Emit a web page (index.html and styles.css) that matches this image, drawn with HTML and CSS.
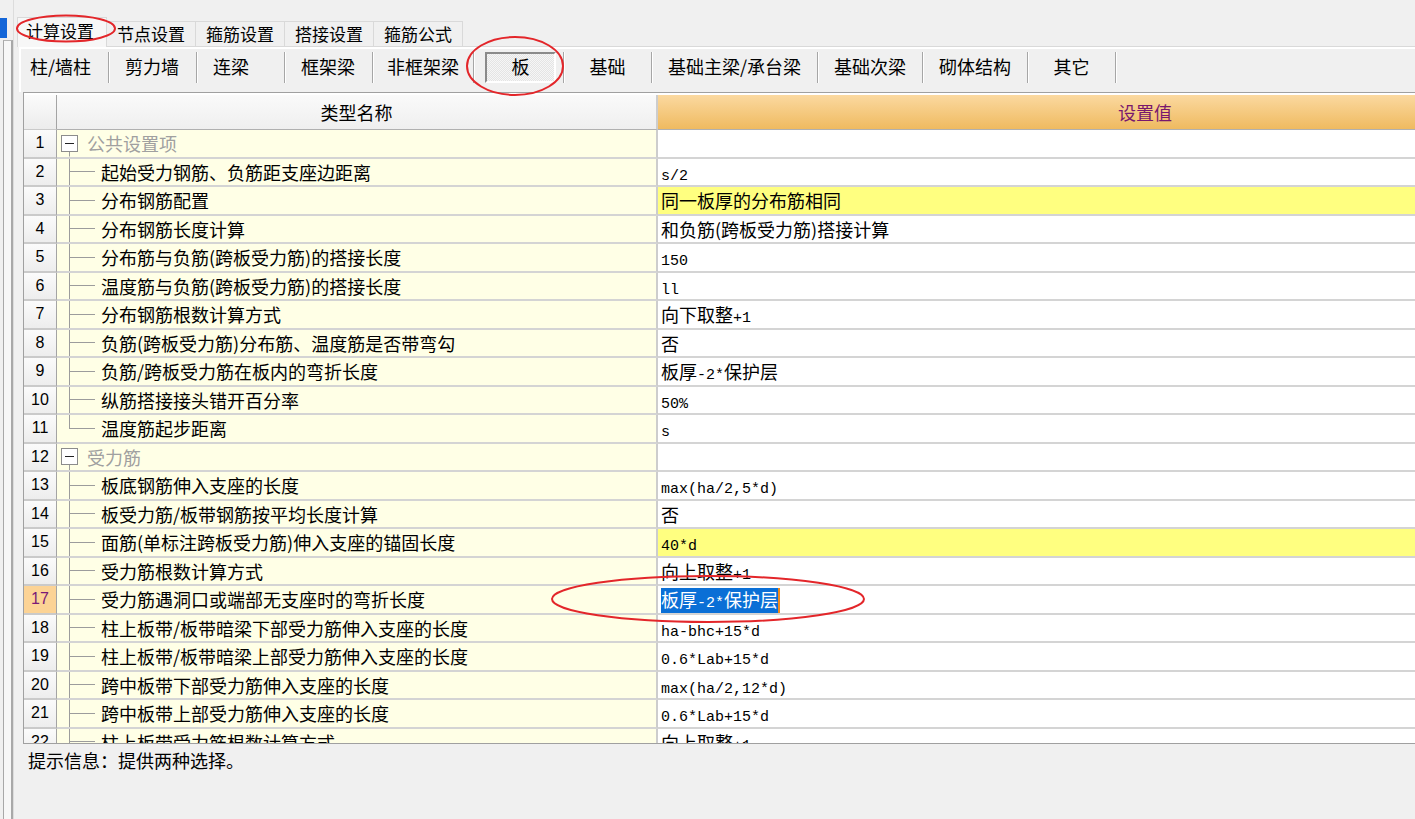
FILE: index.html
```html
<!DOCTYPE html>
<html lang="zh-CN">
<head>
<meta charset="utf-8">
<title>计算设置</title>
<link rel="stylesheet" href="styles.css">
</head>
<body>
<div class="app">
  <div class="side">
    <div class="side-sel"></div>
    <div class="side-list"></div>
  </div>
  <div class="main">
    <div class="tabs">
      <div class="tab active">计算设置</div>
      <div class="tab">节点设置</div>
      <div class="tab">箍筋设置</div>
      <div class="tab">搭接设置</div>
      <div class="tab">箍筋公式</div>
    </div>
    <div class="panel">
      <div class="subtabs">
        <div class="st first">柱/墙柱</div>
        <div class="st">剪力墙</div>
        <div class="st">连梁</div>
        <div class="st">框架梁</div>
        <div class="st tight">非框架梁</div>
        <div class="st sel-wrap"><span class="pressed">板</span></div>
        <div class="st center">基础</div>
        <div class="st">基础主梁/承台梁</div>
        <div class="st">基础次梁</div>
        <div class="st">砌体结构</div>
        <div class="st center">其它</div>
      </div>
      <div class="grid">
        <div class="row head">
          <div class="num"></div>
          <div class="name">类型名称</div>
          <div class="val">设置值</div>
        </div>
        <div class="row">
          <div class="num">1</div>
          <div class="name"><span class="gtree"><span class="box"><span class="minus"></span></span></span><span class="gtext">公共设置项</span></div>
          <div class="val"></div>
        </div>
        <div class="row">
          <div class="num">2</div>
          <div class="name"><span class="tree"></span><span class="text">起始受力钢筋、负筋距支座边距离</span></div>
          <div class="val"><span class="m">s/2</span></div>
        </div>
        <div class="row">
          <div class="num">3</div>
          <div class="name"><span class="tree"></span><span class="text">分布钢筋配置</span></div>
          <div class="val hl">同一板厚的分布筋相同</div>
        </div>
        <div class="row">
          <div class="num">4</div>
          <div class="name"><span class="tree"></span><span class="text">分布钢筋长度计算</span></div>
          <div class="val">和负筋(跨板受力筋)搭接计算</div>
        </div>
        <div class="row">
          <div class="num">5</div>
          <div class="name"><span class="tree"></span><span class="text">分布筋与负筋(跨板受力筋)的搭接长度</span></div>
          <div class="val"><span class="m">150</span></div>
        </div>
        <div class="row">
          <div class="num">6</div>
          <div class="name"><span class="tree"></span><span class="text">温度筋与负筋(跨板受力筋)的搭接长度</span></div>
          <div class="val"><span class="m">ll</span></div>
        </div>
        <div class="row">
          <div class="num">7</div>
          <div class="name"><span class="tree"></span><span class="text">分布钢筋根数计算方式</span></div>
          <div class="val">向下取整<span class="m">+1</span></div>
        </div>
        <div class="row">
          <div class="num">8</div>
          <div class="name"><span class="tree"></span><span class="text">负筋(跨板受力筋)分布筋、温度筋是否带弯勾</span></div>
          <div class="val">否</div>
        </div>
        <div class="row">
          <div class="num">9</div>
          <div class="name"><span class="tree"></span><span class="text">负筋/跨板受力筋在板内的弯折长度</span></div>
          <div class="val">板厚<span class="m">-2*</span>保护层</div>
        </div>
        <div class="row">
          <div class="num">10</div>
          <div class="name"><span class="tree"></span><span class="text">纵筋搭接接头错开百分率</span></div>
          <div class="val"><span class="m">50%</span></div>
        </div>
        <div class="row">
          <div class="num">11</div>
          <div class="name"><span class="tree last"></span><span class="text">温度筋起步距离</span></div>
          <div class="val"><span class="m">s</span></div>
        </div>
        <div class="row">
          <div class="num">12</div>
          <div class="name"><span class="gtree"><span class="box"><span class="minus"></span></span></span><span class="gtext">受力筋</span></div>
          <div class="val"></div>
        </div>
        <div class="row">
          <div class="num">13</div>
          <div class="name"><span class="tree"></span><span class="text">板底钢筋伸入支座的长度</span></div>
          <div class="val"><span class="m">max(ha/2,5*d)</span></div>
        </div>
        <div class="row">
          <div class="num">14</div>
          <div class="name"><span class="tree"></span><span class="text">板受力筋/板带钢筋按平均长度计算</span></div>
          <div class="val">否</div>
        </div>
        <div class="row">
          <div class="num">15</div>
          <div class="name"><span class="tree"></span><span class="text">面筋(单标注跨板受力筋)伸入支座的锚固长度</span></div>
          <div class="val hl"><span class="m">40*d</span></div>
        </div>
        <div class="row">
          <div class="num">16</div>
          <div class="name"><span class="tree"></span><span class="text">受力筋根数计算方式</span></div>
          <div class="val">向上取整<span class="m">+1</span></div>
        </div>
        <div class="row current">
          <div class="num">17</div>
          <div class="name"><span class="tree"></span><span class="text">受力筋遇洞口或端部无支座时的弯折长度</span></div>
          <div class="val"><span class="selection">板厚<span class="m">-2*</span>保护层</span></div>
        </div>
        <div class="row">
          <div class="num">18</div>
          <div class="name"><span class="tree"></span><span class="text">柱上板带/板带暗梁下部受力筋伸入支座的长度</span></div>
          <div class="val"><span class="m">ha-bhc+15*d</span></div>
        </div>
        <div class="row">
          <div class="num">19</div>
          <div class="name"><span class="tree"></span><span class="text">柱上板带/板带暗梁上部受力筋伸入支座的长度</span></div>
          <div class="val"><span class="m">0.6*Lab+15*d</span></div>
        </div>
        <div class="row">
          <div class="num">20</div>
          <div class="name"><span class="tree"></span><span class="text">跨中板带下部受力筋伸入支座的长度</span></div>
          <div class="val"><span class="m">max(ha/2,12*d)</span></div>
        </div>
        <div class="row">
          <div class="num">21</div>
          <div class="name"><span class="tree"></span><span class="text">跨中板带上部受力筋伸入支座的长度</span></div>
          <div class="val"><span class="m">0.6*Lab+15*d</span></div>
        </div>
        <div class="row">
          <div class="num">22</div>
          <div class="name"><span class="tree"></span><span class="text">柱上板带受力筋根数计算方式</span></div>
          <div class="val">向上取整<span class="m">+1</span></div>
        </div>
      </div>
      <div class="hint">提示信息：提供两种选择。</div>
    </div>
  </div>
  <svg class="marks" width="1415" height="819" viewBox="0 0 1415 819">
    <ellipse cx="66" cy="28.5" rx="49" ry="13" />
    <ellipse cx="515" cy="66" rx="48" ry="29" />
    <ellipse cx="708" cy="599" rx="156" ry="23" />
  </svg>
</div>
</body>
</html>
```
FILE: styles.css
```css
html, body {
  margin: 0;
  padding: 0;
}
body {
  background: #f0f0f0;
  font-family: "Noto Sans CJK SC", "Liberation Sans", sans-serif;
  color: #000;
  width: 1415px;
  height: 819px;
  overflow: hidden;
}
.app {
  position: relative;
  display: flex;
  width: 1415px;
  height: 819px;
}

/* left strip */
.side {
  width: 13px;
  flex: none;
  display: flex;
  flex-direction: column;
  border-right: 1px solid #dcdcdc;
}
.side-sel {
  margin-top: 18px;
  width: 7px;
  height: 20px;
  background: #1466d8;
}
.side-list {
  margin-top: 2px;
  flex: 1;
  margin-left: 3px;
  border-top: 1px solid #b4b4b4;
  border-left: 1px solid #a8a8a8;
  border-right: 2px solid #a8a8a8;
  background: #f7f7f7;
}

/* main */
.main {
  flex: 1;
  display: flex;
  flex-direction: column;
  padding-left: 3px;
  min-width: 0;
}
.tabs {
  margin-top: 17px;
  height: 29px;
  display: flex;
  align-items: flex-end;
}
.tab {
  height: 25px;
  box-sizing: border-box;
  padding: 0 10px;
  border: 1px solid #d9d9d9;
  border-bottom: none;
  margin-right: -1px;
  font-size: 17px;
  line-height: 23px;
  background: #f0f0f0;
  white-space: nowrap;
}
.tab.active {
  line-height: 26px;
  padding: 0 12px 0 8px;
  background: #f7f7f7;
  position: relative;
  z-index: 1;
  margin-bottom: -1px;
  height: 30px;
}

.panel {
  flex: 1;
  display: flex;
  flex-direction: column;
  border-top: 1px solid #d9d9d9;
  margin-left: 2px;
  min-width: 0;
}
.subtabs {
  border-top: 2px solid #fff;
  border-left: 2px solid #fff;
  height: 45px;
  box-sizing: border-box;
  padding-top: 3px;
  display: flex;
  align-items: flex-start;
}
.st {
  height: 31px;
  box-sizing: border-box;
  min-width: 88px;
  padding: 0 16px;
  font-size: 18px;
  line-height: 29px;
  white-space: nowrap;
  border-right: 1px solid #a6a6a6;
  box-shadow: 1px 0 0 #fff;
  display: flex;
  align-items: center;
  padding-bottom: 2px;
}
.st.first {
  padding-left: 9px;
}
.st.tight {
  padding-left: 14px;
  padding-right: 14px;
}
.st.center {
  justify-content: center;
}
.st.sel-wrap {
  padding: 0 7px 0 11px;
}
.pressed {
  display: flex;
  align-items: center;
  justify-content: center;
  width: 71px;
  height: 31px;
  box-sizing: border-box;
  border-top: 2px solid #8a8a8a;
  border-left: 2px solid #8a8a8a;
  border-right: 2px solid #fff;
  border-bottom: 2px solid #fff;
  padding-bottom: 2px;
  background: repeating-conic-gradient(#f6f6f6 0 25%, #e4e4e4 0 50%) 0 0 / 2px 2px;
}

/* grid */
.grid {
  margin-left: 4px;
  height: 652px;
  box-sizing: border-box;
  border-top: 1px solid #a0a0a0;
  border-left: 1px solid #a0a0a0;
  border-bottom: 1px solid #a0a0a0;
  padding-top: 2px;
  background: #fff;
  overflow: hidden;
  min-width: 0;
}
.row {
  display: grid;
  grid-template-columns: 33px 601px 974px;
  height: 28.5px;
}
.row > div {
  box-sizing: border-box;
  border-bottom: 2px solid #d4d4d4;
  white-space: nowrap;
  overflow: hidden;
}
.num {
  display: flex;
  align-items: center;
  justify-content: center;
  font-family: "Liberation Sans", sans-serif;
  font-size: 16px;
  background: linear-gradient(#fbfbfb, #ededed);
  border-right: 1px solid #a4a4a4;
  border-bottom-color: #cacaca !important;
}
.name {
  display: flex;
  align-items: center;
  background: #ffffe6;
  font-size: 18px;
  padding-left: 4px;
  border-right: 2px solid #cdcdcd;
}
.val {
  font-size: 18px;
  line-height: 26px;
  padding-left: 3px;
  background: #fff;
}
.val.hl {
  background: #ffff80;
}
.m {
  font-family: "Liberation Mono", monospace;
  font-size: 15px;
}

.row.head {
  height: 35px;
}
.row.head > div {
  border-bottom: 1px solid #b0b0b0;
}
.row.head .num {
  background: linear-gradient(#fbfbfb, #ececec);
}
.row.head .name {
  justify-content: center;
  background: linear-gradient(#fafafa, #efefef);
  padding-left: 0;
}
.row.head .val {
  display: flex;
  align-items: center;
  justify-content: center;
  padding-left: 0;
  color: #78176e;
  background: linear-gradient(#fbd9a0, #efba60);
}

.row.current .num {
  background: #fcd395;
  color: #7a1a78;
}

.gtree {
  width: 17px;
  height: 100%;
  display: flex;
  align-items: center;
  justify-content: center;
  background: linear-gradient(#9c9c9c, #9c9c9c) 8px 100% / 1px 50% no-repeat;
}
.box {
  width: 15px;
  height: 15px;
  border: 1px solid #8c8c8c;
  background: #fff;
  display: flex;
  align-items: center;
  justify-content: center;
}
.minus {
  width: 9px;
  height: 1px;
  background: #222;
}
.gtext {
  margin-left: 9px;
  color: #a0a0a0;
}
.tree {
  width: 34px;
  height: 100%;
  flex: none;
  background:
    linear-gradient(#9c9c9c, #9c9c9c) 8px 0 / 1px 100% no-repeat,
    linear-gradient(#9c9c9c, #9c9c9c) 8px 50% / 26px 1px no-repeat;
}
.tree.last {
  background:
    linear-gradient(#9c9c9c, #9c9c9c) 8px 0 / 1px 50% no-repeat,
    linear-gradient(#9c9c9c, #9c9c9c) 8px 50% / 26px 1px no-repeat;
}
.text {
  margin-left: 6px;
}
.selection {
  display: inline-block;
  background: #0a6fd6;
  color: #fff;
  line-height: 22px;
  border-right: 2px solid #f08a1c;
}

.hint {
  padding: 4px 0 0 9px;
  font-size: 18px;
  line-height: 24px;
}

/* red annotation marks */
.marks {
  position: absolute;
  left: 0;
  top: 0;
  z-index: 10;
  pointer-events: none;
}
.marks ellipse {
  fill: none;
  stroke: #e3262a;
  stroke-width: 2;
}
```
